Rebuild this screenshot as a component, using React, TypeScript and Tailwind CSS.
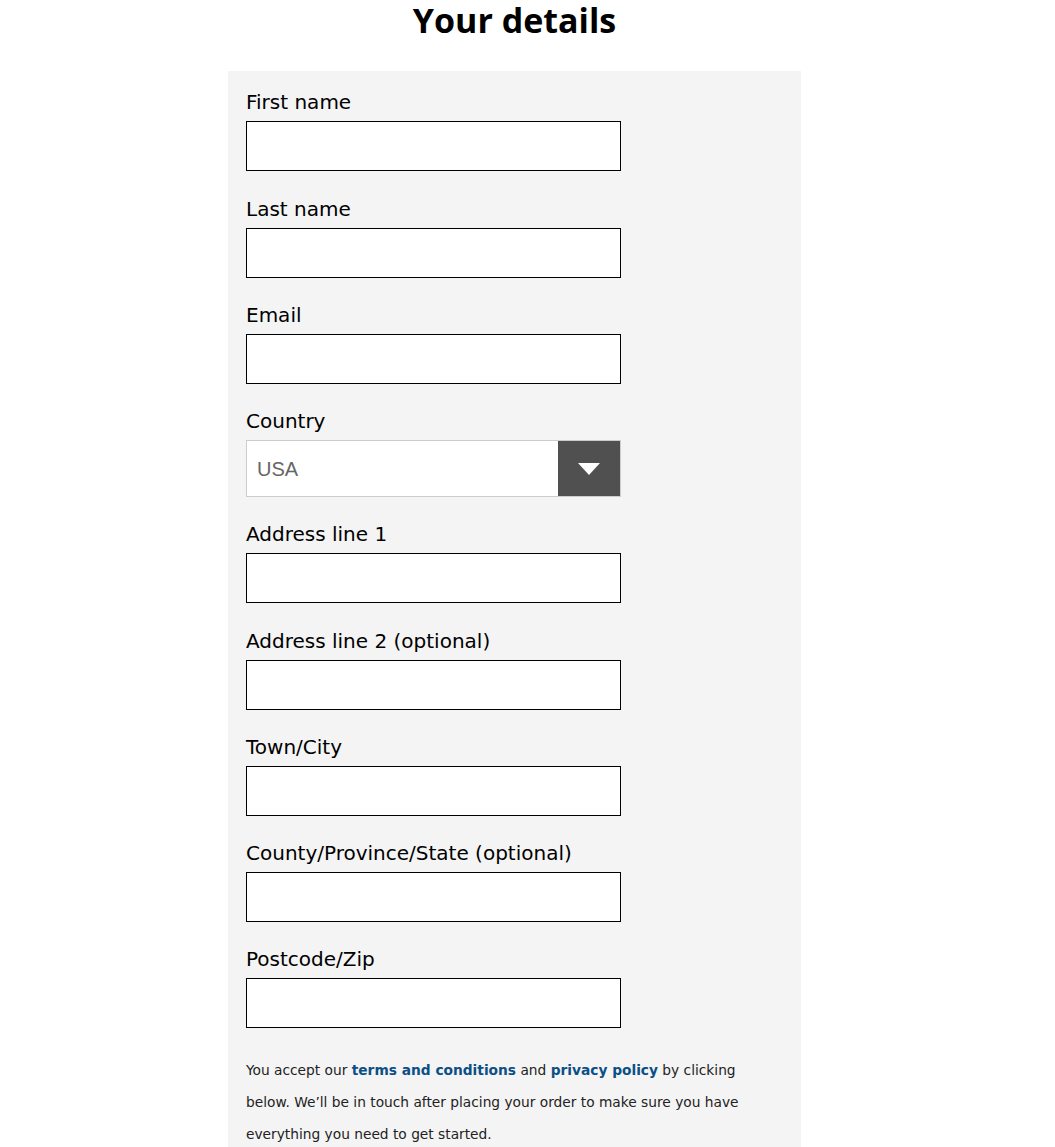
import React from "react";

const labelFont = { fontFamily: '"DejaVu Sans", "Noto Sans", sans-serif' };

const Field = ({ label, extra = "" }: { label: string; extra?: string }) => (
  <div className={"flex flex-col " + extra}>
    <label className="text-[20px] leading-[28px] text-black mb-[5px]" style={labelFont}>{label}</label>
    <input className="w-[375px] h-[50px] bg-white border border-black outline-none" />
  </div>
);

export default function App() {
  return (
    <div className="bg-white min-h-[1147px]" style={{ fontFamily: '"Open Sans", "Noto Sans", sans-serif' }}>
      <h1 className="w-[573px] ml-[228px] text-center font-bold text-[34px] leading-[40px] text-black pt-0">
        Your details
      </h1>
      <div className="w-[573px] ml-[228px] mt-[31px] bg-[#f4f4f4] pl-[18px] pt-[17px] pb-[20px]">
        <div className="flex flex-col gap-[23px]">
          <Field label="First name" />
          <Field label="Last name" extra="mt-[1px]" />
          <Field label="Email" />
          <div className="flex flex-col">
            <label className="text-[20px] leading-[28px] text-black mb-[5px]" style={labelFont}>Country</label>
            <div className="w-[375px] h-[57px] flex bg-white border border-[#cccccc]">
              <div className="flex-1 flex items-center pl-[10px] text-[20px] text-[#666666]" style={{ fontFamily: '"Liberation Sans", Arial, sans-serif' }}>
                USA
              </div>
              <div className="w-[62px] h-full bg-[#505050] flex items-center justify-center">
                <svg width="22" height="12" viewBox="0 0 22 12"><polygon points="0,0 22,0 11,12" fill="white" /></svg>
              </div>
            </div>
          </div>
          <Field label="Address line 1" />
          <Field label="Address line 2 (optional)" extra="mt-[1px]" />
          <Field label="Town/City" />
          <Field label="County/Province/State (optional)" />
          <Field label="Postcode/Zip" />
        </div>
        <p className="mt-[26px] w-[520px] text-[13.75px] leading-[32px] text-[#222]" style={labelFont}>
          You accept our <a className="font-bold text-[#0b4f86]">terms and conditions</a> and{" "}
          <a className="font-bold text-[#0b4f86]">privacy policy</a> by clicking below. We’ll be in touch after placing your order to make sure you have everything you need to get started.
        </p>
      </div>
    </div>
  );
}
